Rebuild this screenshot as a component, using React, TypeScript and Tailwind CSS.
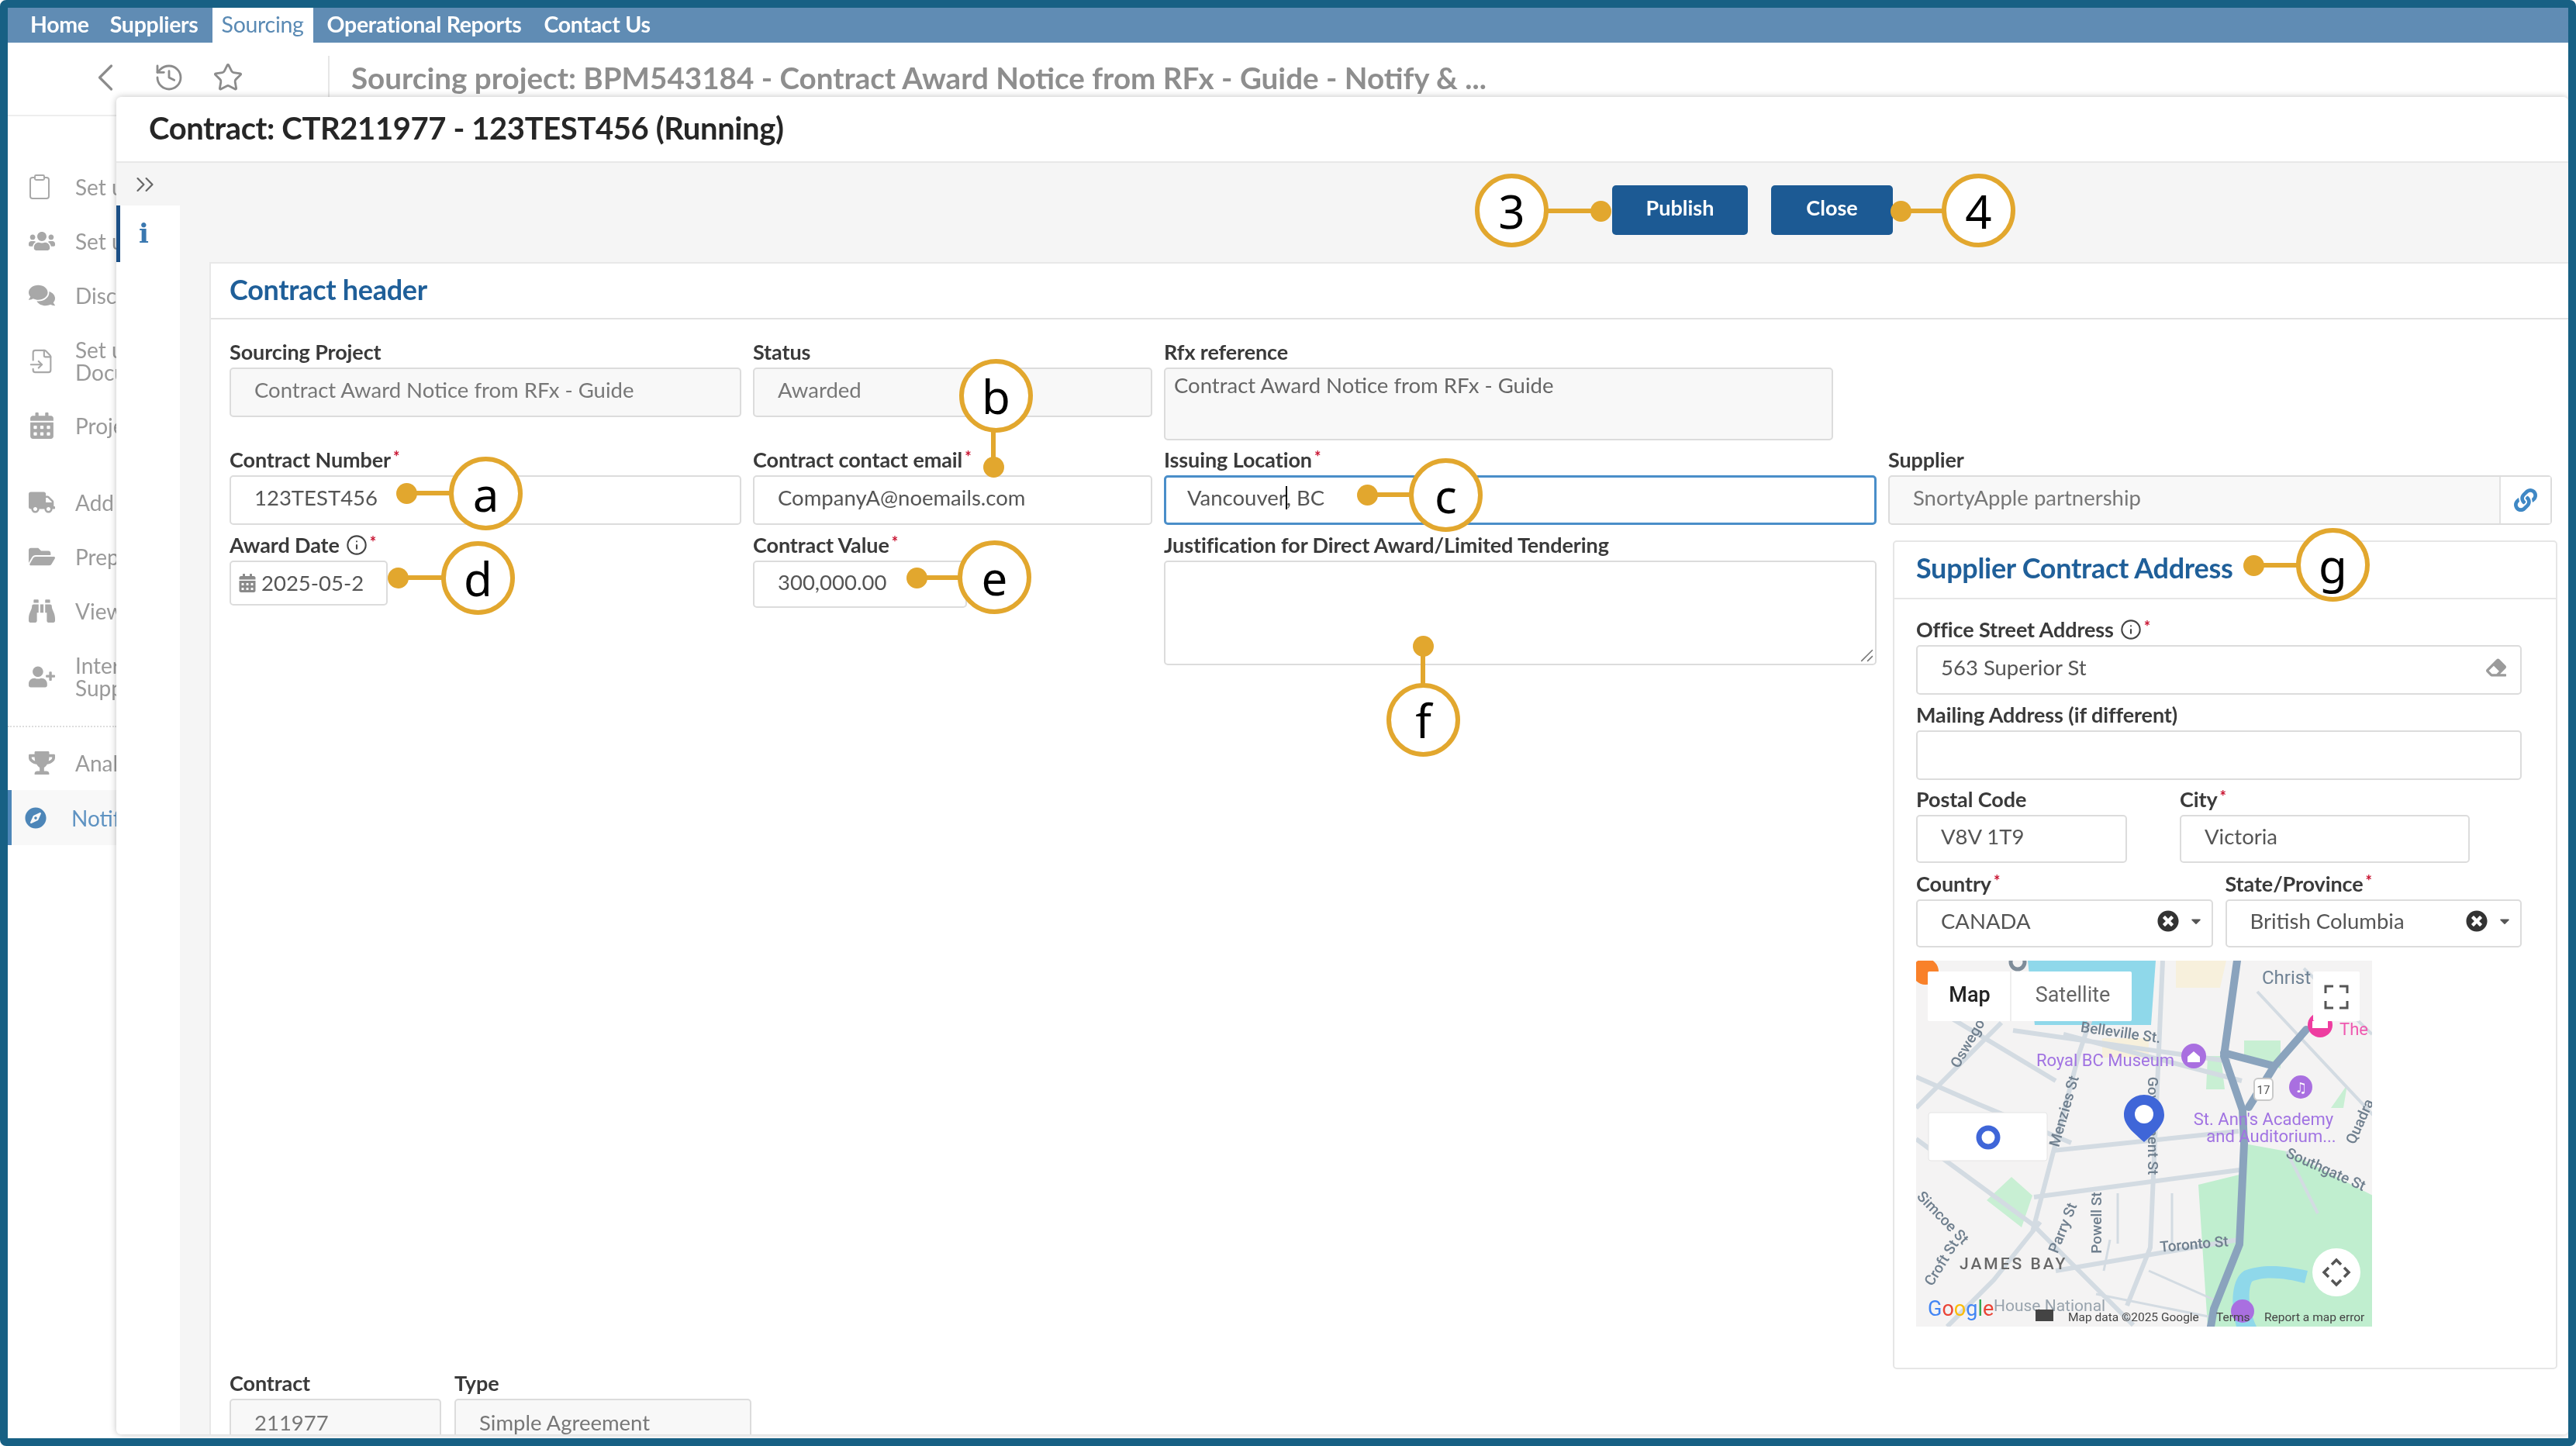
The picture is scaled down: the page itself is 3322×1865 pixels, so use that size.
import type { ReactNode } from "react";
import { ChevronLeft, ChevronsRight, Clipboard, FileInput, History, Star, Info } from "lucide-react";
import {
  FaBinoculars,
  FaCalendarAlt,
  FaCaretDown,
  FaComments,
  FaCompass,
  FaEraser,
  FaFolderOpen,
  FaLink,
  FaTimesCircle,
  FaTrophy,
  FaTruck,
  FaUserPlus,
  FaUsers,
} from "react-icons/fa";

const NavBar = () => (
  <nav className="flex h-[45px] items-center bg-[#608cb4] pb-[2px] pl-[29px] text-[28.5px] font-bold tracking-[-0.3px] text-white">
    <span>Home</span>
    <span className="ml-[27px]">Suppliers</span>
    <span className="-mb-[2px] ml-[18px] flex h-[45px] w-[130px] items-center justify-center bg-white pb-[2px] font-normal text-[#5a8ab4]">
      Sourcing
    </span>
    <span className="ml-[18px]">Operational Reports</span>
    <span className="ml-[29px]">Contact Us</span>
  </nav>
);

const SubBar = () => (
  <div className="flex h-[95px] border-b-2 border-[#eeeeee] text-[#8c8c8c]">
    <ChevronLeft className="ml-[96px] mt-[15px] h-[60px] w-[60px]" strokeWidth={1.3} />
    <History className="ml-[32px] mt-[25px] h-[40px] w-[40px]" strokeWidth={1.7} />
    <Star className="ml-[36px] mt-[25px] h-[40px] w-[40px]" strokeWidth={1.7} />
    <div className="ml-[109px] mt-[17px] h-[78px] w-[2px] bg-[#e6e6e6]" />
    <div className="ml-[28px] mt-[17px] text-[38.6px] font-bold whitespace-nowrap text-[#8e8e8e]">
      Sourcing project: BPM543184 - Contract Award Notice from RFx - Guide - Notify &amp; ...
    </div>
  </div>
);

const SideItem = ({ icon, children, h = "h-[70px]" }: { icon: ReactNode; children: ReactNode; h?: string }) => (
  <div className={`flex items-center whitespace-nowrap pl-[27px] text-[28px] leading-[29px] text-[#9a9a9a] ${h}`}>
    <div className="flex w-[60px] shrink-0 text-[34px] text-[#a8a8a8]">{icon}</div>
    <div>{children}</div>
  </div>
);

const Sidebar = () => (
  <aside className="w-[140px] overflow-hidden pt-[56px]">
    <SideItem icon={<Clipboard className="h-[36px] w-[36px] -translate-x-[4px]" strokeWidth={1.3} />}>Set up</SideItem>
    <SideItem icon={<FaUsers />}>Set up</SideItem>
    <SideItem icon={<FaComments />}>Discuss</SideItem>
    <SideItem icon={<FileInput className="h-[34px] w-[34px]" strokeWidth={1.5} />} h="h-[100px]">
      Set up
      <br />
      Documents
    </SideItem>
    <SideItem icon={<FaCalendarAlt />} h="h-[66px]">
      Project
    </SideItem>
    <div className="h-[31px]" />
    <SideItem icon={<FaTruck />}>Add</SideItem>
    <SideItem icon={<FaFolderOpen />}>Prepare</SideItem>
    <SideItem icon={<FaBinoculars />}>View</SideItem>
    <SideItem icon={<FaUserPlus />} h="h-[100px]">
      Internal
      <br />
      Support
    </SideItem>
    <div className="mt-[13px] border-t-2 border-dotted border-[#dddddd]" />
    <div className="h-[11px]" />
    <SideItem icon={<FaTrophy />}>Analyse</SideItem>
    <div className="flex h-[71px] items-center whitespace-nowrap border-l-[5px] border-[#4d86b8] bg-[#f8f8f8] pl-[17px] text-[28px] text-[#5f93c2]">
      <FaCompass className="mr-[32px] shrink-0 text-[28px] text-[#4d86b8]" />
      Notify
    </div>
  </aside>
);

const Req = () => <span className="relative -top-[4px] ml-[3px] text-[20px] text-[#c8102e]">*</span>;

const Label = ({ children, req, info }: { children: ReactNode; req?: boolean; info?: boolean }) => (
  <div className="flex h-[38px] items-center whitespace-nowrap pb-[2px] text-[27px] font-bold tracking-[-0.1px] text-[#3a3a3a]">
    {children}
    {info && <Info className="ml-[8px] h-[28px] w-[28px] text-[#444444]" strokeWidth={1.8} />}
    {req && <Req />}
  </div>
);

const Box = ({
  children,
  muted,
  focused,
  pad = "pl-[30px] pb-[6px]",
  className = "h-[64px]",
}: {
  children?: ReactNode;
  muted?: boolean;
  focused?: boolean;
  pad?: string;
  className?: string;
}) => (
  <div
    className={`flex items-center rounded-[5px] text-[27.5px] whitespace-nowrap ${
      focused ? "border-[3px] border-[#4a8ec9]" : "border-2 border-[#dcdcdc]"
    } ${muted ? "bg-[#f8f8f8] text-[#777777]" : "bg-white text-[#555555]"} ${pad} ${className}`}
  >
    {children}
  </div>
);

const Select = ({ label, value }: { label: string; value: string }) => (
  <div className="w-[383px]">
    <Label req>{label}</Label>
    <Box className="h-[62px] pr-[10px]">
      <span className="flex-1">{value}</span>
      <FaTimesCircle className="text-[28px] text-[#333333]" />
      <FaCaretDown className="ml-[12px] text-[20px] text-[#555555]" />
    </Box>
  </div>
);

const MapLabel = ({ x, y, r = 0, children }: { x: number; y: number; r?: number; children: string }) => (
  <text
    x={x}
    y={y}
    transform={`rotate(${r} ${x} ${y})`}
    textAnchor="middle"
    fontFamily="Roboto, sans-serif"
    fontSize="19"
    fontWeight="500"
    fill="#6f7f8e"
  >
    {children}
  </text>
);

const MapPanel = () => (
  <svg viewBox="0 0 588 472" className="h-[472px] w-[588px]">
    <rect width="588" height="472" fill="#f4f3f3" />
    <path d="M335 0h65l-8 35h-57zM240 100h60v25h-60z" fill="#f7f0dc" />
    <path d="M144 0h165l-6 83h-150z" fill="#8fd8ea" />
    <path d="M423 236l55 10 111 57v169H376l-12-183 53-13z" fill="#c0eecf" />
    <path d="M91 309l32-30 27 24-14 41zM376 123h17l5 43h-24zM423 103h47v36l-47-12zM556 160l-5 30h-16z" fill="#c8efd3" />
    <path d="M413 472c-8-30-6-62 10-72 25-10 55-6 82 0l-4 16c-22-6-52-10-68-2-6 12-4 38 6 58z" fill="#8fd8ea" />
    <g fill="none" stroke="#d3dbe2" strokeWidth="6">
      <path d="M318 0l-13 300-3 70-30 75" />
      <path d="M190 95l230 60M125 90l280 40" />
      <path d="M0 150l80 35 120 50M0 190l110-110M30 65l150 90" />
      <path d="M0 230l150 110 130 130M150 350l60-230 20-60M40 472l60-60 60-75" />
      <path d="M176 245l240-25M152 305l265-35M180 400l235-40" />
      <path d="M260 300v65M330 300v65M250 360l-8 40" strokeWidth="3" />
      <path d="M440 40l150 160M500 10l88 85M478 246l40 80" strokeWidth="4" />
      <path d="M232 430l150 30M300 400l90 40" strokeWidth="3" />
    </g>
    <g fill="none" stroke="#8aa3bd" strokeLinecap="round" strokeLinejoin="round">
      <path d="M414 0l-17 123 24 70 2 43-6 130-33 83-4 23" strokeWidth="10" />
      <path d="M397 119l65 17 41-47M462 136l-33 53" strokeWidth="10" />
    </g>
    <circle cx="12" cy="14" r="17" fill="#f9812a" />
    <circle cx="131" cy="2" r="9" fill="none" stroke="#7e8c99" strokeWidth="5" />
    <circle cx="358" cy="123" r="16" fill="#a96fe0" />
    <path d="M350 124l8-7 8 7v7h-16z" fill="#ffffff" />
    <circle cx="496" cy="163" r="15" fill="#a96fe0" />
    <text x="496" y="170" textAnchor="middle" fontFamily="DejaVu Sans, sans-serif" fontSize="18" fill="#ffffff">♫</text>
    <circle cx="521" cy="83" r="16" fill="#ee3da0" />
    <rect x="511" y="78" width="20" height="9" fill="#ffffff" />
    <circle cx="421" cy="452" r="15" fill="#a96fe0" />
    <rect x="436" y="152" width="24" height="28" rx="5" fill="#ffffff" stroke="#c9c9c9" strokeWidth="2" />
    <text x="448" y="172" textAnchor="middle" fontFamily="Roboto, sans-serif" fontSize="15" fill="#555555">17</text>
    <text x="446" y="30" fontFamily="Roboto, sans-serif" fontSize="24" fill="#6f8294">Christ</text>
    <text x="546" y="96" fontFamily="Roboto, sans-serif" fontSize="22" fill="#ef59b0">The</text>
    <g fontFamily="Roboto, sans-serif" fontSize="22" fill="#a173e2" textAnchor="middle">
      <text x="244" y="136">Royal BC Museum</text>
      <text x="448" y="212">St. Ann's Academy</text>
      <text x="458" y="234">and Auditorium...</text>
    </g>
    <MapLabel x={263} y={99} r={8}>Belleville St.</MapLabel>
    <MapLabel x={72} y={110} r={-60}>Oswego</MapLabel>
    <MapLabel x={197} y={196} r={-74}>Menzies St</MapLabel>
    <MapLabel x={299} y={213} r={90}>Government St</MapLabel>
    <MapLabel x={359} y={372} r={-5}>Toronto St</MapLabel>
    <MapLabel x={526} y={275} r={24}>Southgate St</MapLabel>
    <MapLabel x={195} y={347} r={-68}>Parry St</MapLabel>
    <MapLabel x={239} y={338} r={-90}>Powell St</MapLabel>
    <MapLabel x={38} y={393} r={-58}>Croft St</MapLabel>
    <MapLabel x={30} y={336} r={46}>Simcoe St</MapLabel>
    <MapLabel x={578} y={210} r={-66}>Quadra</MapLabel>
    <text x="56" y="398" fontFamily="Roboto, sans-serif" fontSize="21" fontWeight="500" letterSpacing="3" fill="#666666">JAMES BAY</text>
    <text x="100" y="452" fontFamily="Roboto, sans-serif" fontSize="21" fill="#98a3ad">House National</text>
    <path d="M294 173c-15 0-26 12-26 26 0 14 14 24 26 35 12-11 26-21 26-35 0-14-11-26-26-26z" fill="#3f66d8" />
    <circle cx="294" cy="198" r="12" fill="#ffffff" />
    <rect x="15" y="14" width="263" height="64" rx="2" fill="#ffffff" />
    <path d="M122 14v64" stroke="#eeeeee" strokeWidth="2" />
    <text x="69" y="53" textAnchor="middle" fontFamily="Roboto, sans-serif" fontSize="27" fontWeight="500" fill="#222222">Map</text>
    <text x="202" y="53" textAnchor="middle" fontFamily="Roboto, sans-serif" fontSize="27" fill="#666666">Satellite</text>
    <rect x="512" y="14" width="60" height="64" rx="2" fill="#ffffff" />
    <path d="M528 42v-9h10M546 33h10v9M556 52v9h-10M538 61h-10v-9" fill="none" stroke="#555555" strokeWidth="3" />
    <rect x="16" y="196" width="153" height="62" rx="3" fill="#ffffff" stroke="#e4e4e4" />
    <circle cx="93" cy="228" r="12" fill="none" stroke="#3f66d8" strokeWidth="7" />
    <circle cx="542" cy="402" r="31" fill="#ffffff" />
    <path d="M536 392l6-6 6 6M536 412l6 6 6-6M532 396l-6 6 6 6M552 396l6 6-6 6" fill="none" stroke="#555555" strokeWidth="3.5" />
    <text x="15" y="458" fontFamily="Roboto, sans-serif" fontSize="27">
      <tspan fill="#4285f4">G</tspan>
      <tspan fill="#ea4335">o</tspan>
      <tspan fill="#fbbc05">o</tspan>
      <tspan fill="#4285f4">g</tspan>
      <tspan fill="#34a853">l</tspan>
      <tspan fill="#ea4335">e</tspan>
    </text>
    <rect x="154" y="450" width="23" height="15" fill="#444444" />
    <g fontFamily="Roboto, sans-serif" fontSize="15.5" fill="#444444">
      <text x="196" y="465">Map data ©2025 Google</text>
      <text x="387" y="465">Terms</text>
      <text x="449" y="465">Report a map error</text>
    </g>
  </svg>
);

const AddressCard = () => (
  <div className="mt-[12px] ml-[6px] h-[1069px] w-[857px] rounded-[5px] border-2 border-[#e6e6e6]">
    <div className="flex h-[74px] items-center border-b-2 border-[#e6e6e6] pb-[6px] pl-[28px] text-[36px] font-bold tracking-[-0.3px] text-[#1f5f99]">
      Supplier Contract Address
    </div>
    <div className="flex flex-col pt-[21px] pl-[28px] pr-[44px]">
      <Label req info>Office Street Address</Label>
      <Box className="h-[64px] pr-[18px]">
        <span className="flex-1">563 Superior St</span>
        <FaEraser className="text-[26px] text-[#9b9b9b]" />
      </Box>
      <div className="mt-[8px]">
        <Label>Mailing Address (if different)</Label>
        <Box className="h-[64px]" />
      </div>
      <div className="mt-[7px] flex">
        <div className="w-[272px]">
          <Label>Postal Code</Label>
          <Box className="h-[62px]">V8V 1T9</Box>
        </div>
        <div className="ml-[68px] w-[374px]">
          <Label req>City</Label>
          <Box className="h-[62px]">Victoria</Box>
        </div>
      </div>
      <div className="mt-[9px] flex gap-[16px]">
        <Select label="Country" value="CANADA" />
        <Select label="State/Province" value="British Columbia" />
      </div>
      <div className="mt-[17px]">
        <MapPanel />
      </div>
    </div>
  </div>
);

const ContractPanel = () => (
  <section className="flex-1 overflow-hidden border-t-2 border-l-2 border-[#e8e8e8] bg-white">
    <div className="flex h-[72px] items-center border-b-2 border-[#e2e2e2] pb-[5px] pl-[24px] text-[36px] font-bold tracking-[-0.3px] text-[#1f5f99]">
      Contract header
    </div>
    <div className="grid grid-cols-[660px_515px_919px_856px] grid-rows-[139px_110px_1081px_auto] gap-x-[15px] pt-[24px] pl-[24px]">
      <div>
        <Label>Sourcing Project</Label>
        <Box muted>Contract Award Notice from RFx - Guide</Box>
      </div>
      <div>
        <Label>Status</Label>
        <Box muted>Awarded</Box>
      </div>
      <div className="col-span-2">
        <Label>Rfx reference</Label>
        <div className="h-[94px] w-[863px] rounded-[5px] border-2 border-[#dcdcdc] bg-[#f8f8f8] pl-[11px] text-[27.5px] text-[#666666]">
          Contract Award Notice from RFx - Guide
        </div>
      </div>

      <div>
        <Label req>Contract Number</Label>
        <Box>123TEST456</Box>
      </div>
      <div>
        <Label req>Contract contact email</Label>
        <Box>CompanyA@noemails.com</Box>
      </div>
      <div>
        <Label req>Issuing Location</Label>
        <Box focused pad="pl-[27px] pb-[6px]">
          Vancouver
          <span className="mx-[-1px] inline-block h-[30px] w-[2px] bg-black" />, BC
        </Box>
      </div>
      <div>
        <Label>Supplier</Label>
        <div className="flex h-[64px] w-[856px] rounded-[5px] border-2 border-[#dcdcdc] bg-[#f8f8f8] text-[27.5px] text-[#777777]">
          <div className="flex flex-1 items-center pb-[6px] pl-[30px]">SnortyApple partnership</div>
          <div className="flex w-[66px] items-center justify-center border-l-2 border-[#e2e2e2] bg-white">
            <FaLink className="text-[30px] text-[#3f88c5]" />
          </div>
        </div>
      </div>

      <div>
        <Label req info>Award Date</Label>
        <Box pad="pl-[9px]" className="h-[58px] w-[204px] text-[#444444]">
          <FaCalendarAlt className="mr-[6px] text-[24px] text-[#8a8a8a]" />
          2025-05-2
        </Box>
      </div>
      <div>
        <Label req>Contract Value</Label>
        <Box className="h-[61px] w-[276px]">300,000.00</Box>
      </div>
      <div>
        <Label>Justification for Direct Award/Limited Tendering</Label>
        <div className="relative h-[135px] rounded-[5px] border-2 border-[#dcdcdc]">
          <svg viewBox="0 0 16 16" className="absolute right-[2px] bottom-[2px] h-[18px] w-[18px]">
            <path d="M15 2L2 15M15 9l-6 6" stroke="#777777" strokeWidth="1.4" fill="none" />
          </svg>
        </div>
      </div>
      <AddressCard />

      <div className="col-span-2 flex gap-[17px]">
        <div className="w-[273px]">
          <Label>Contract</Label>
          <Box muted pad="pl-[30px] pb-[2px]">211977</Box>
        </div>
        <div className="w-[383px]">
          <Label>Type</Label>
          <Box muted pad="pl-[30px] pb-[2px]">Simple Agreement</Box>
        </div>
      </div>
    </div>
  </section>
);

const ContractModal = () => (
  <div className="absolute top-[115px] right-0 bottom-[5px] left-[140px] flex flex-col overflow-hidden rounded-[6px] bg-white shadow-[0_0_8px_rgba(0,0,0,0.25)]">
    <div className="flex h-[85px] shrink-0 items-center border-b-2 border-[#e8e8e8] pb-[4px] pl-[42px] text-[40px] font-bold tracking-[-0.4px] text-[#262626]">
      Contract: CTR211977 - 123TEST456 (Running)
    </div>
    <div className="flex min-h-0 flex-1">
      <div className="w-[82px] shrink-0">
        <div className="flex h-[55px] items-center bg-[#f5f5f5] pl-[18px] text-[#666666]">
          <ChevronsRight className="h-[38px] w-[38px]" strokeWidth={1.4} />
        </div>
        <div className="flex h-[73px] items-center border-l-[5px] border-[#1b4f86] pl-[24px] [font-family:'DejaVu_Serif',serif] text-[34px] font-bold text-[#3a78b0]">
          i
        </div>
      </div>
      <div className="flex min-w-0 flex-1 flex-col bg-[#f5f5f5]">
        <div className="flex h-[128px] shrink-0 justify-end gap-[30px] pt-[29px] pr-[871px]">
          <button className="h-[64px] w-[175px] rounded-[5px] bg-[#1c5a94] pb-[6px] text-[27px] font-bold text-white">
            Publish
          </button>
          <button className="h-[64px] w-[157px] rounded-[5px] bg-[#1c5a94] pb-[6px] text-[27px] font-bold text-white">
            Close
          </button>
        </div>
        <div className="flex min-h-0 flex-1 pl-[38px]">
          <ContractPanel />
        </div>
      </div>
    </div>
  </div>
);

const Circle = ({ className, children }: { className: string; children: string }) => (
  <div
    className={`absolute flex h-[95px] w-[95px] items-center justify-center rounded-full border-[6px] border-[#e2a72e] bg-white [font-family:'Noto_Sans',sans-serif] text-[60px] leading-none text-black ${className}`}
  >
    {children}
  </div>
);

const Dot = ({ className }: { className: string }) => (
  <div className={`absolute h-[27px] w-[27px] rounded-full bg-[#e2a72e] ${className}`} />
);

const Line = ({ className }: { className: string }) => <div className={`absolute bg-[#e2a72e] ${className}`} />;

const Callouts = () => (
  <>
    <Line className="top-[269px] left-[1995px] h-[6px] w-[60px]" />
    <Dot className="top-[259px] left-[2051px]" />
    <Circle className="top-[224px] left-[1902px]">3</Circle>

    <Line className="top-[269px] left-[2458px] h-[6px] w-[50px]" />
    <Dot className="top-[259px] left-[2438px]" />
    <Circle className="top-[224px] left-[2504px]">4</Circle>

    <Line className="top-[633px] left-[535px] h-[6px] w-[50px]" />
    <Dot className="top-[623px] left-[511px]" />
    <Circle className="top-[589px] left-[579px]">a</Circle>

    <Line className="top-[555px] left-[1278px] h-[40px] w-[6px]" />
    <Dot className="top-[589px] left-[1268px]" />
    <Circle className="top-[463px] left-[1237px]">b</Circle>

    <Line className="top-[635px] left-[1770px] h-[6px] w-[52px]" />
    <Dot className="top-[625px] left-[1750px]" />
    <Circle className="top-[591px] left-[1817px]">c</Circle>

    <Line className="top-[742px] left-[520px] h-[6px] w-[55px]" />
    <Dot className="top-[732px] left-[500px]" />
    <Circle className="top-[698px] left-[569px]">d</Circle>

    <Line className="top-[742px] left-[1190px] h-[6px] w-[50px]" />
    <Dot className="top-[732px] left-[1169px]" />
    <Circle className="top-[697px] left-[1235px]">e</Circle>

    <Line className="top-[838px] left-[1832px] h-[46px] w-[6px]" />
    <Dot className="top-[820px] left-[1822px]" />
    <Circle className="top-[881px] left-[1788px]">f</Circle>

    <Line className="top-[726px] left-[2915px] h-[6px] w-[50px]" />
    <Dot className="top-[716px] left-[2893px]" />
    <Circle className="top-[681px] left-[2961px]">g</Circle>
  </>
);

export default function App() {
  return (
    <div className="relative h-[1865px] w-[3322px] overflow-hidden bg-white [font-family:Lato,sans-serif]">
      <div className="relative h-full overflow-hidden rounded-[8px] border-[10px] border-[#176084] bg-white blur-[0.7px]">
        <NavBar />
        <SubBar />
        <Sidebar />
        <ContractModal />
      </div>
      <Callouts />
    </div>
  );
}
